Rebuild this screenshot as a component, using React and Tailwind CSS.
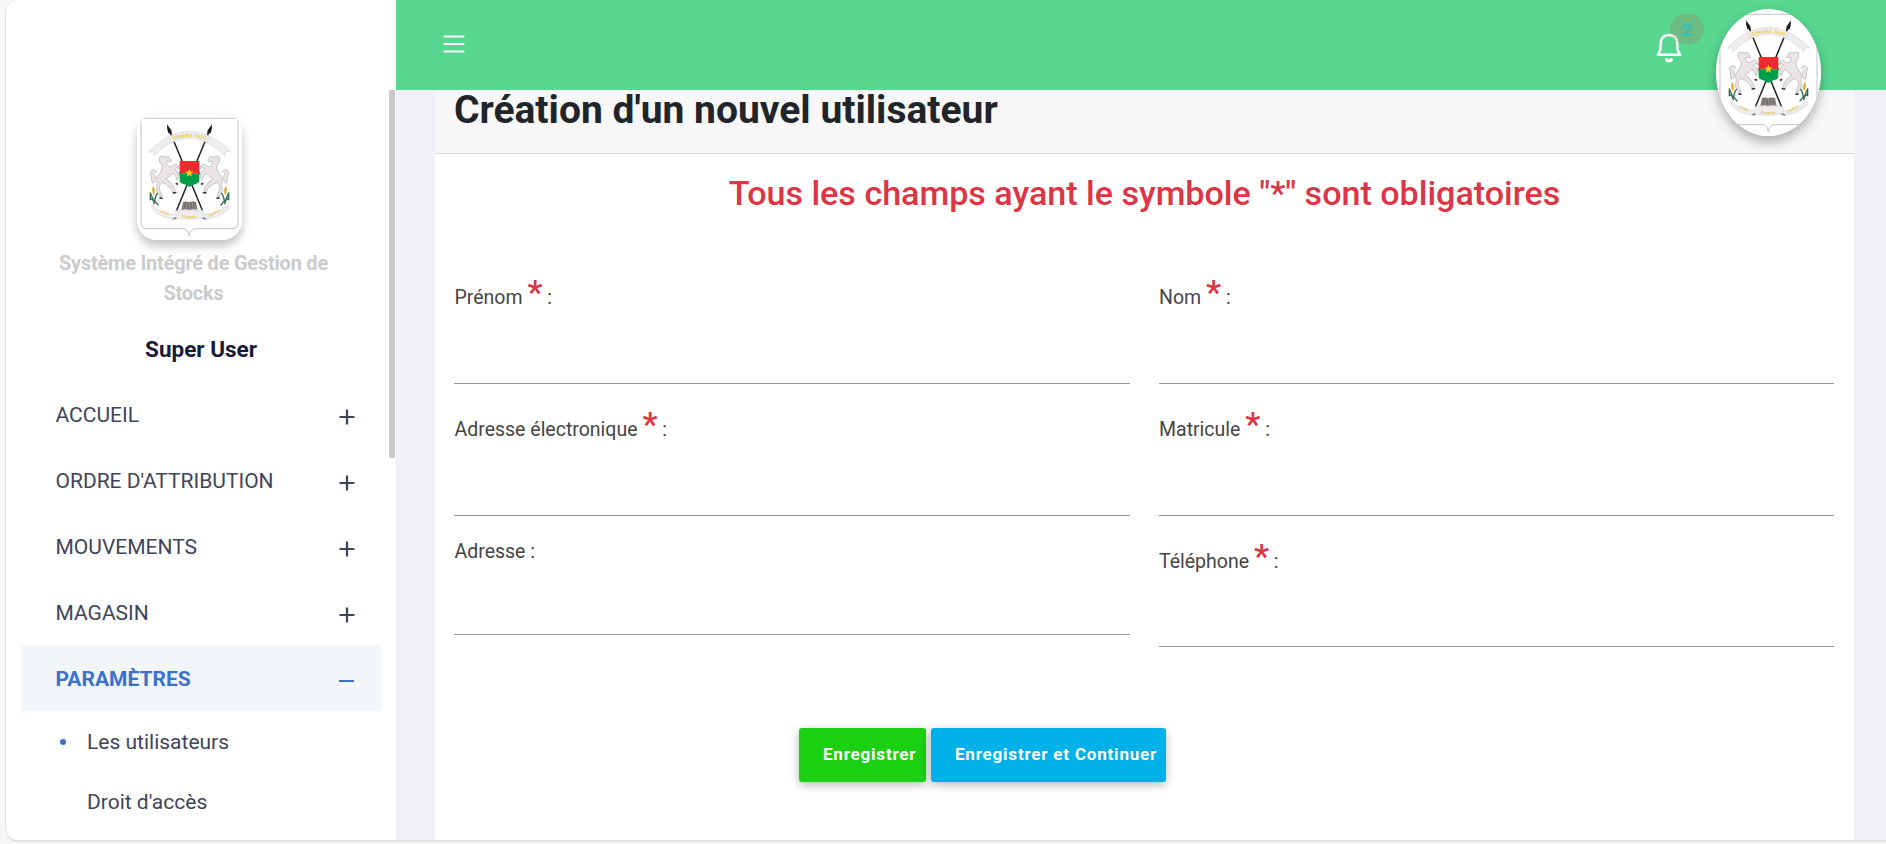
import React, { useId } from 'react';

function Horse() {
  return (
    <g>
      <path
        d="M68 131 C72 128 79 130 86 133 L94 130 L97 134 L103 142 L100 147 L90 144 C87 150 90 158 97 161 C104 162 110 154 117 153 L125 160 L128 168 L118 163 L113 169 L122 177 L126 191 L119 201 L117 192 L108 180 C101 190 93 193 87 198 L102 209 L111 223 L115 238 L108 239 L102 226 L86 213 L73 208 L66 222 L70 238 L75 250 L68 250 L58 232 L61 212 C56 202 60 192 66 184 C75 174 77 166 74 154 C66 150 66 138 68 131 Z"
        fill="#e9e5e7"
        stroke="#aaa5a8"
        strokeWidth="1.8"
        strokeLinejoin="round"
      />
      <path
        d="M60 178 C56 166 41 168 40 181 C48 188 40 202 47 211 C56 206 58 194 52 184"
        fill="#e9e5e7"
        stroke="#aaa5a8"
        strokeWidth="1.8"
      />
      <path d="M68 252 l9 2 v4 l-10 -1z M107 238 l11 -1 v4 l-11 1z M117 209 l6 2 -1 6 -7 -4z M126 176 l6 6 -4 3z" fill="#262626" />
      <path d="M48 220 C44 228 46 236 50 246 C55 238 55 228 48 220Z" fill="#d9ac33" stroke="#d9ac33" />
      <path
        d="M40 238 C42 248 50 258 52 274 M62 240 C56 246 54 256 52 268 M41 256 C46 258 50 262 52 268 M52 262 L64 277 M40 240 V262"
        fill="none"
        stroke="#2f6b4c"
        strokeWidth="4"
      />
    </g>
  );
}

function Emblem({ className }) {
  const id = useId();
  return (
    <svg viewBox="0 0 315 381" className={className}>
      <rect width="315" height="381" fill="#fff" />
      <path
        d="M12 0 V330 Q12 347 30 347 H138 Q153 347 157 368 Q161 347 176 347 H285 Q303 347 303 330 V0 M0 16 H315"
        fill="none"
        stroke="#b9b9b9"
        strokeWidth="2.6"
      />
      <g stroke="#222" strokeWidth="4.5">
        <path d="M93 42 L197 294" />
        <path d="M222 42 L118 294" />
      </g>
      <path d="M90 34 L103 52 L105 64 L100 59 L95 62 L91 50 Z M225 34 L212 52 L210 64 L215 59 L220 62 L224 50 Z" fill="#1c1c1c" />
      <path
        d="M34 118 Q60 88 94 71 Q157 39 221 71 Q255 88 281 116 L265 117 L264 130 Q240 104 209 88 Q157 64 106 88 Q72 104 51 130 L50 116 Z"
        fill="#efedf0"
        stroke="#d0cdd1"
        strokeWidth="1.5"
      />
      <path d="M94 71 L106 88 M221 71 L209 88" stroke="#c5c2c6" strokeWidth="1.5" />
      <path id={id + 't'} d="M102 84 Q157 60 214 84" fill="none" />
      <text fontSize="14" fontWeight="700" fill="#ead04a" fontFamily="Roboto, sans-serif" textAnchor="middle">
        <textPath href={'#' + id + 't'} startOffset="50%">BURKINA {'\u00a0'}FASO</textPath>
      </text>
      <Horse />
      <g transform="translate(315 0) scale(-1 1)">
        <Horse />
      </g>
      <path
        d="M44 276 Q74 305 112 305 L118 292 H197 L203 305 Q241 305 273 276 L275 288 Q242 316 206 318 L200 314 Q157 324 115 314 L109 318 Q73 316 46 288 Z"
        fill="#efedf0"
        stroke="#cbc8cc"
        strokeWidth="1.5"
      />
      <path d="M108 316 l-2 4 14 -2 -4 -6z M207 316 l2 4 -14 -2 4 -6z" fill="#8b888c" />
      <g fontSize="12" fontWeight="700" fill="#e3cb52" fontFamily="Roboto, sans-serif" textAnchor="middle">
        <text transform="translate(82 302) rotate(24)">Unité</text>
        <text x="157" y="314">Progrès</text>
        <text transform="translate(232 303) rotate(-26)">Justice</text>
      </g>
      <path d="M138 267 Q148 264 156 268 Q166 264 177 267 L182 290 Q168 287 157 291 Q146 287 133 290 Z" fill="#77736f" />
      <path d="M157 267 V291 M140 272 L136 288 M149 270 L147 288 M166 270 L168 288 M174 272 L178 288" stroke="#b4b1ae" strokeWidth="1.4" />
      <path d="M128 144 H187 V181 H128 Z" fill="#ef2b2d" />
      <path d="M128 181 H187 V205 Q183 213 169 215 L157 222 L146 215 Q132 213 128 205 Z" fill="#009e49" />
      <path d="M157 167 L160.400 175.500 L169.500 176 L162.500 182 L164.800 191 L157 186 L149.200 191 L151.500 182 L144.500 176 L153.600 175.500 Z" fill="#fcd116" />
    </svg>
  );
}

const menu = ['ACCUEIL', "ORDRE D'ATTRIBUTION", 'MOUVEMENTS', 'MAGASIN'];

function Sidebar() {
  return (
    <aside className="flex w-[390px] shrink-0 bg-white">
      <div className="w-[383px] shrink-0 pt-[113px] pl-[15px]">
        <div className="flex w-[360px] flex-col items-center">
          <Emblem className="mr-[23px] h-[127px] w-[105px] rounded-[20px] shadow-[0_6px_10px_rgba(0,0,0,0.24)]" />
          <p className="mt-2 mr-[15px] w-[300px] text-center text-[20px] leading-[30px] font-bold tracking-[-0.23px] text-[#cbcbcb]">
            Système Intégré de Gestion de Stocks
          </p>
          <p className="mt-[24px] h-[49px] text-[22.5px] leading-[34px] font-bold text-[#15193a]">Super User</p>
        </div>
        <nav className="w-[360px] text-[21px] text-[#40445a]">
          {menu.map((label) => (
            <div key={label} className="flex h-[66px] items-center justify-between pr-[26px] pl-[34.5px]">
              <span className="mt-1">{label}</span>
              <svg viewBox="0 0 16 16" className="mt-[5px] h-4 w-4" stroke="currentColor" strokeWidth="2.2">
                <path d="M0.500 8 H15.500 M8 0.500 V15.500" />
              </svg>
            </div>
          ))}
          <div className="flex h-[66px] items-center justify-between bg-[#f2f6f9] pr-[27px] pl-[34.5px] font-bold text-[#3b71ca]">
            <span className="mt-1">PARAMÈTRES</span>
            <span className="mt-[6px] h-[2px] w-[15px] bg-[#3b71ca]" />
          </div>
          <div className="flex h-[60px] items-center pt-1 pl-[39px]">
            <span className="mr-[21px] mb-0.5 h-[6px] w-[6px] rounded-full bg-[#3b71ca]" />
            <span>Les utilisateurs</span>
          </div>
          <div className="flex h-[60px] items-center pt-1 pl-[66px]">Droit d'accès</div>
        </nav>
      </div>
      <div className="mt-[90px] h-[368px] w-[6px] bg-[#c9c9c9]" />
    </aside>
  );
}

function Topbar() {
  return (
    <header className="relative z-10 flex h-[90px] shrink-0 items-start bg-[#58d791]">
      <svg viewBox="0 0 22 20" className="mt-[34px] ml-[47px] h-5 w-[22px]" stroke="#fff" strokeWidth="2" strokeLinecap="round">
        <path d="M1.500 2.500 H20.500 M1.500 10 H20.500 M1.500 17.500 H20.500" />
      </svg>
      <div className="relative mt-[33px] ml-auto h-[30px] w-[26px]">
        <svg viewBox="0 0 26 30" className="h-[30px] w-[26px]" fill="none" stroke="#fff" strokeWidth="2.5" strokeLinecap="round" strokeLinejoin="round">
          <path d="M1.800 21.800 H24.200 C21.500 19.500 21.300 16 21.300 11 C21.300 5 18 2 13 2 C8 2 4.700 5 4.700 11 C4.700 16 4.500 19.500 1.800 21.800 Z" />
          <path d="M10.500 26.500 C11.500 28.600 14.500 28.600 15.500 26.500" strokeWidth="3" />
        </svg>
        <span className="absolute -top-[19px] left-[14px] flex h-[30px] w-[34px] items-center justify-center rounded-full bg-[#b84a4a]/20 pt-[2px] text-[18px] leading-none font-bold text-[#39bfb4]">
          2
        </span>
      </div>
      <Emblem className="mt-[9px] mr-[65px] ml-[34px] h-[127px] w-[105px] rounded-[50%] shadow-[0_6px_12px_rgba(0,0,0,0.3)]" />
    </header>
  );
}

function Field({ label, required, className }) {
  return (
    <div className={className}>
      <label className="block h-[42px] pl-[0.5px] text-[19.5px] leading-[41px] whitespace-nowrap text-[#454545]">
        {label}{' '}
        {required && (
          <>
            <span className="text-[34px] leading-none font-medium text-[#dc3545]">*</span>{' '}
          </>
        )}
        :
      </label>
      <input type="text" aria-label={label} className="mt-auto block h-10 w-full border-b border-[#9a9a9a] outline-none" />
    </div>
  );
}

export default function App() {
  return (
    <div className="h-[844px] w-[1886px] overflow-hidden bg-[#f6f6f6] pl-[5px] font-[Roboto,sans-serif]">
      <div className="flex h-[842px] overflow-hidden rounded-l-[14px] border-b-2 border-l border-[#e2e2e2] bg-white">
        <Sidebar />
        <div className="flex min-w-0 flex-1 flex-col bg-[#f0f1f7]">
          <Topbar />
          <main className="mr-8 ml-[39px] flex-1 bg-white">
            <div className="h-[64px] border-b border-[#d8d9db] bg-[#f7f7f7] pl-[19px]">
              <h1 className="text-[39px] leading-[40px] font-bold text-[#212529]">Création d'un nouvel utilisateur</h1>
            </div>
            <h2 className="mt-5 text-center text-[34.1px] leading-[38px] font-medium text-[#dc3545]">
              Tous les champs ayant le symbole "*" sont obligatoires
            </h2>
            <form>
              <div className="mr-5 ml-[19px] grid grid-cols-2 gap-x-[29px] pt-[63px]">
                <div className="flex flex-col">
                  <Field label="Prénom" required className="flex h-[109px] flex-col" />
                  <Field label="Adresse électronique" required className="mt-[23px] flex h-[109px] flex-col" />
                  <Field label="Adresse" className="mt-[15px] flex h-[104px] flex-col" />
                </div>
                <div className="flex flex-col">
                  <Field label="Nom" required className="flex h-[109px] flex-col" />
                  <Field label="Matricule" required className="mt-[23px] flex h-[109px] flex-col" />
                  <Field label="Téléphone" required className="mt-[23px] flex h-[108px] flex-col" />
                </div>
              </div>
              <div className="mt-[81px] ml-[364px] flex gap-[5px] text-[17px] font-bold tracking-[0.8px] text-white">
                <button type="button" className="h-[54px] w-[127px] rounded-[3px] bg-[#1bcf12] pl-[24px] text-left whitespace-nowrap shadow-[0_3px_10px_rgba(0,0,0,0.28)]">
                  Enregistrer
                </button>
                <button type="button" className="h-[54px] w-[235px] rounded-[3px] bg-[#00b0e8] pl-[24px] text-left whitespace-nowrap shadow-[0_3px_10px_rgba(0,0,0,0.28)]">
                  Enregistrer et Continuer
                </button>
              </div>
            </form>
          </main>
        </div>
      </div>
    </div>
  );
}
